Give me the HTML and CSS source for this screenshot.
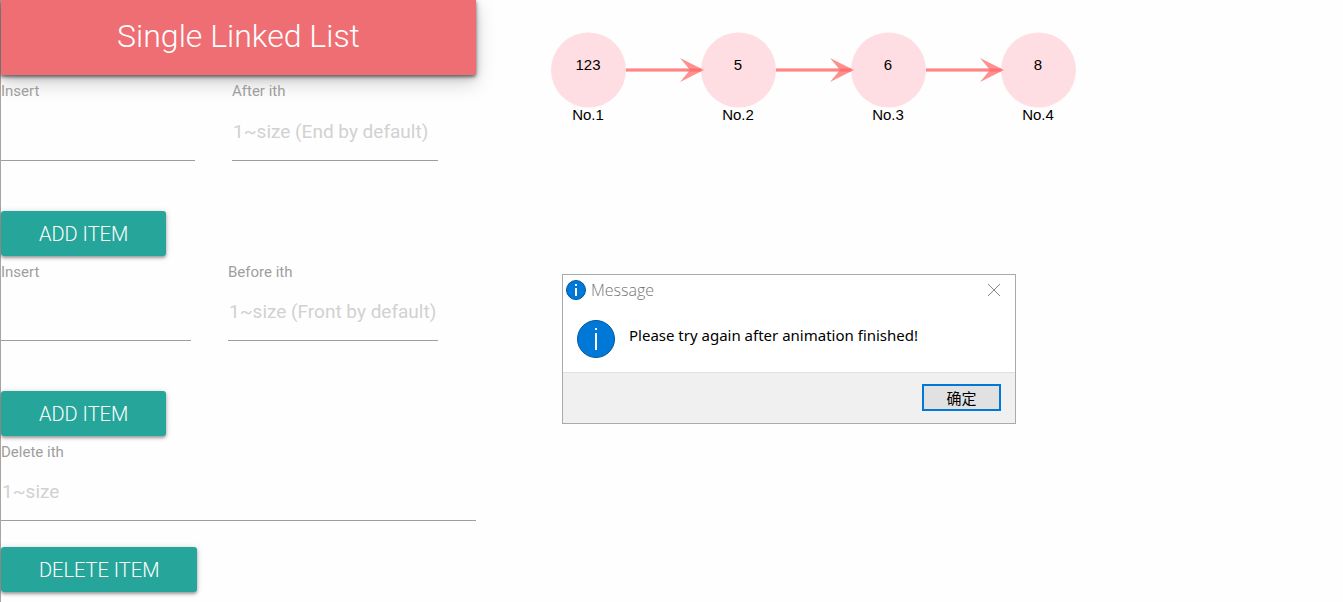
FILE: index.html
```html
<!DOCTYPE html>
<html lang="en">
<head>
<meta charset="utf-8">
<title>Single Linked List</title>
<link rel="stylesheet" href="styles.css">
</head>
<body>
<div class="page">
  <aside class="panel">
    <header class="banner"><h1>Single Linked List</h1></header>
    <form class="group">
      <div class="fields fields-after">
        <div class="field"><label for="insert-a">Insert</label><input id="insert-a" type="text"></div>
        <div class="field"><label for="after">After ith</label><input id="after" type="text" placeholder="1~size (End by default)"></div>
      </div>
      <button class="btn" type="button">ADD ITEM</button>
    </form>
    <form class="group">
      <div class="fields fields-before">
        <div class="field"><label for="insert-b">Insert</label><input id="insert-b" type="text"></div>
        <div class="field"><label for="before">Before ith</label><input id="before" type="text" placeholder="1~size (Front by default)"></div>
      </div>
      <button class="btn" type="button">ADD ITEM</button>
    </form>
    <form class="group group-delete">
      <div class="field"><label for="delete">Delete ith</label><input id="delete" type="text" placeholder="1~size"></div>
      <button class="btn" type="button">DELETE ITEM</button>
    </form>
  </aside>
  <main class="stage">
    <svg class="diagram" width="526" height="100" viewBox="0 0 526 100" role="img" aria-label="Linked list: 123, 5, 6, 8">
      <defs>
        <g id="arrow">
          <path d="M75 38H150" stroke="#ff6b6b" stroke-opacity=".5" stroke-width="4"/>
          <path d="M75 38H150" stroke="#ff6b6b" stroke-opacity=".65" stroke-width="2"/>
          <path d="M129 26L153 38L129 50L139 38Z" fill="#ff6b6b" fill-opacity=".75"/>
        </g>
      </defs>
      <g fill="#ffdee3">
        <circle cx="37.500" cy="38" r="37.500"/>
        <circle cx="187.500" cy="38" r="37.500"/>
        <circle cx="337.500" cy="38" r="37.500"/>
        <circle cx="487.500" cy="38" r="37.500"/>
      </g>
      <use href="#arrow"/>
      <use href="#arrow" x="150"/>
      <use href="#arrow" x="300"/>
      <g class="node-text">
        <text x="37" y="38">123</text><text x="37" y="88">No.1</text>
        <text x="187" y="38">5</text><text x="187" y="88">No.2</text>
        <text x="337" y="38">6</text><text x="337" y="88">No.3</text>
        <text x="487" y="38">8</text><text x="487" y="88">No.4</text>
      </g>
    </svg>
    <section class="dialog" role="dialog" aria-labelledby="dialog-title">
      <div class="titlebar">
        <svg width="20" height="20" viewBox="0 0 20 20" aria-hidden="true"><circle cx="10" cy="10" r="9.500" fill="#0078d7" stroke="#00599f"/><path d="M9 4h2v2H9zM9 8h2v8H9z" fill="#fff"/></svg>
        <h2 id="dialog-title">Message</h2>
        <button class="close" type="button" aria-label="Close"><svg width="12" height="12" viewBox="0 0 12 12"><path d="M0 0L12 12M12 0L0 12" stroke="#888"/></svg></button>
      </div>
      <div class="message">
        <svg width="38" height="38" viewBox="0 0 38 38" aria-hidden="true"><circle cx="19" cy="19" r="18.500" fill="#0078d7" stroke="#00599f"/><path d="M18 8h2v2h-2zM18 13h2v17h-2z" fill="#fff"/></svg>
        <p>Please try again after animation finished!</p>
      </div>
      <div class="actions"><button class="ok" type="button" lang="zh">确定</button></div>
    </section>
  </main>
</div>
</body>
</html>
```
FILE: styles.css
```css
* { box-sizing: border-box; }
body { margin: 0; background: #fefefe; font-family: Roboto, sans-serif; }
h1, h2, p { margin: 0; font-weight: 400; }
svg { display: block; flex: none; }
button { font-family: inherit; }
.page { display: grid; grid-template-columns: minmax(0, 476fr) minmax(0, 867fr); min-height: 100vh; }
.panel { border-left: 1px solid #aaa59f; display: flex; flex-direction: column; gap: 5px; }
.banner {
  height: 75px;
  display: flex;
  align-items: center;
  justify-content: center;
  padding-bottom: 4px;
  background: #ee6e73;
  border-radius: 0 0 3px 0;
  color: #fff;
  box-shadow: 0 2px 3px rgba(0, 0, 0, .4), 0 2px 7px rgba(0, 0, 0, .3), 0 8px 20px rgba(0, 0, 0, .18);
}
.banner h1 { font-size: 32px; font-weight: 300; line-height: 40px; }
.group { display: flex; flex-direction: column; align-items: flex-start; gap: 50px; }
.group-delete { gap: 26px; }
.group-delete .field { width: 100%; }
.fields { display: grid; width: 100%; padding-right: 38px; column-gap: 37px; }
.fields-after { grid-template-columns: minmax(0, 194fr) minmax(0, 206fr); }
.fields-after input { height: 59px; }
.fields-before { grid-template-columns: minmax(0, 190fr) minmax(0, 210fr); }
.field { display: flex; flex-direction: column; }
.field label { font-size: 15px; line-height: 22px; color: #9e9e9e; }
.field input {
  width: 100%;
  height: 58px;
  padding: 0;
  border: 0;
  border-bottom: 1px solid #9e9e9e;
  border-radius: 0;
  background: transparent;
  font-family: inherit;
  font-size: 19px;
  color: #333;
  outline: 0;
}
.field.field input { padding-left: 1px; }
.fields-after .field input { height: 59px; }
.field input::placeholder { color: #d1d1d1; opacity: 1; }
.btn {
  height: 45px;
  padding: 0 38px;
  border: 0;
  border-radius: 3px;
  background: #26a69a;
  color: #fff;
  font-size: 20px;
  font-weight: 300;
  box-shadow: 0 2px 3px rgba(0, 0, 0, .3), 0 1px 6px rgba(0, 0, 0, .18);
}
.stage { padding: 32px 0 0 75px; }
.node-text { font: 15px "Liberation Sans", Arial, sans-serif; text-anchor: middle; fill: #000; }
.dialog {
  width: 454px;
  max-width: 100%;
  margin: 142px 0 0 11px;
  border: 1px solid #aaa;
  background: #fff;
  font-family: "Open Sans", "Noto Sans CJK SC", sans-serif;
}
.titlebar { display: flex; align-items: center; height: 30px; padding: 0 15px 0 3px; gap: 5px; }
.titlebar h2 { flex: 1; font-size: 16px; font-weight: 300; color: #777; }
.close { padding: 0; border: 0; background: none; }
.message { display: flex; align-items: flex-start; gap: 14px; padding: 15px 14px 14px; }
.message p { font-family: "Noto Sans", sans-serif; font-size: 15px; line-height: 30px; color: #000; }
.actions { display: flex; justify-content: flex-end; padding: 11px 14px 12px; background: #f0f0f0; border-top: 1px solid #dfdfdf; }
.ok { width: 79px; height: 27px; padding: 0; border: 2px solid #0078d7; background: #e1e1e1; color: #000; font-family: "Noto Sans CJK SC", sans-serif; font-size: 15px; line-height: 22px; }
```
